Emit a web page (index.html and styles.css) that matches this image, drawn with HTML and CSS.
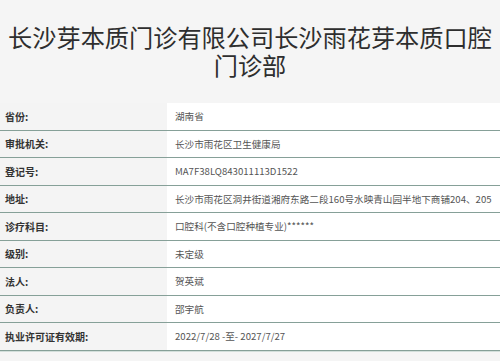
FILE: index.html
```html
<!DOCTYPE html>
<html lang="zh">
<head>
<meta charset="utf-8">
<link rel="stylesheet" href="styles.css">
</head>
<body>
<div class="page">
  <h1 class="title"><span class="line">长沙芽本质门诊有限公司长沙雨花芽本质口腔</span><span class="line">门诊部</span></h1>
  <div class="info">
    <div class="row"><div class="label">省份:</div><div class="value">湖南省</div></div>
    <div class="row"><div class="label">审批机关:</div><div class="value">长沙市雨花区卫生健康局</div></div>
    <div class="row"><div class="label">登记号:</div><div class="value">MA7F38LQ843011113D1522</div></div>
    <div class="row"><div class="label">地址:</div><div class="value">长沙市雨花区洞井街道湘府东路二段160号水映青山园半地下商铺204、205</div></div>
    <div class="row"><div class="label">诊疗科目:</div><div class="value">口腔科(不含口腔种植专业)******</div></div>
    <div class="row"><div class="label">级别:</div><div class="value">未定级</div></div>
    <div class="row"><div class="label">法人:</div><div class="value">贺英斌</div></div>
    <div class="row"><div class="label">负责人:</div><div class="value">邵宇航</div></div>
    <div class="row"><div class="label">执业许可证有效期:</div><div class="value">2022/7/28 -至- 2027/7/27</div></div>
  </div>
</div>
</body>
</html>
```
FILE: styles.css
```css
html, body {
  margin: 0;
  padding: 0;
  background: #f5f5f5;
}
body {
  font-family: "Noto Sans CJK SC", "Noto Sans", sans-serif;
  color: #333;
  width: 500px;
  height: 361px;
  overflow: hidden;
}
.title {
  margin: 0;
  padding: 23px 0 24px;
  font-size: 24.2px;
  line-height: 28px;
  font-weight: normal;
  text-align: center;
  color: #2e2e2e;
}
.line {
  display: block;
  white-space: nowrap;
}
.info {
  display: flex;
  flex-direction: column;
}
.row {
  display: grid;
  grid-template-columns: 167px 1fr;
  height: 26.5px;
  border-bottom: 1px solid #86a098;
  box-shadow: 0 1px 0 #d3dfdb;
}
.label {
  display: flex;
  align-items: center;
  padding-left: 5px;
  font-size: 10px;
  font-weight: bold;
  color: #333;
  background: #f4f4f4;
}
.value {
  display: flex;
  align-items: center;
  padding-left: 8px;
  font-size: 9.6px;
  color: #555;
  background: #fff;
  white-space: nowrap;
}
```
